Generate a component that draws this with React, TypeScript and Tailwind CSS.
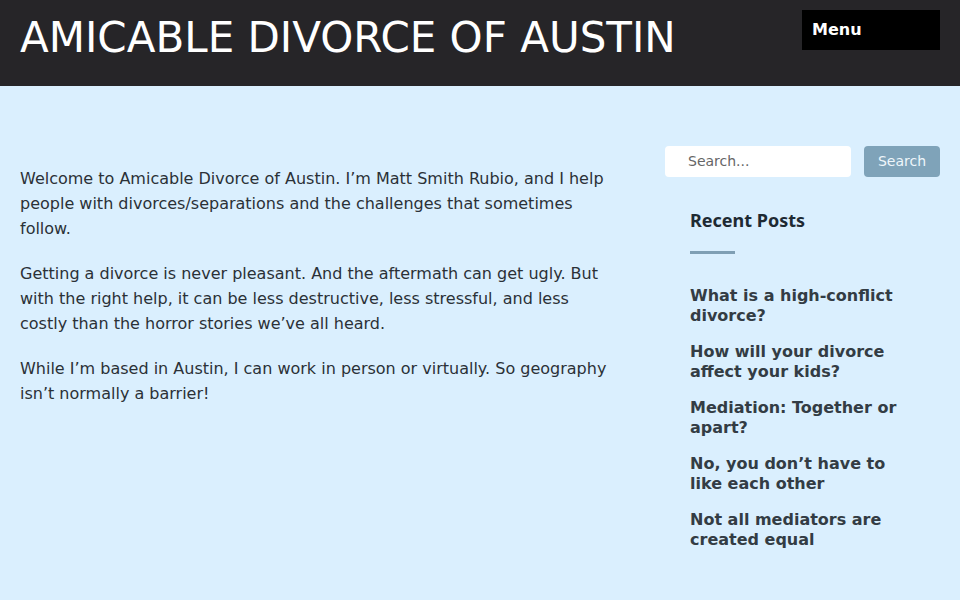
import React from "react";

const posts = [
  "What is a high-conflict divorce?",
  "How will your divorce affect your kids?",
  "Mediation: Together or apart?",
  "No, you don\u2019t have to like each other",
  "Not all mediators are created equal",
];

export default function App() {
  return (
    <div className="min-h-[600px] bg-[#daeffe] font-['DejaVu_Sans',sans-serif]">
      <header className="h-[86px] bg-[#262528] flex justify-between items-start">
        <h1 className="pl-[20px] pt-[13px] text-[42px] leading-[50px] font-normal text-white">
          AMICABLE DIVORCE OF AUSTIN
        </h1>
        <div className="mt-[10px] mr-[20px] w-[138px] h-[40px] bg-black text-white font-bold text-[16px] flex items-center pl-[10px]">
          Menu
        </div>
      </header>
      <div className="flex">
        <main className="w-[600px] ml-[20px] pt-[80px] text-[16px] leading-[25px] text-[#2b3137]">
          <p className="mb-[20px]">
            Welcome to Amicable Divorce of Austin. I’m Matt Smith Rubio, and I help people with divorces/separations and the challenges that sometimes follow.
          </p>
          <p className="mb-[20px]">
            Getting a divorce is never pleasant. And the aftermath can get ugly. But with the right help, it can be less destructive, less stressful, and less costly than the horror stories we’ve all heard.
          </p>
          <p>
            While I’m based in Austin, I can work in person or virtually. So geography isn’t normally a barrier!
          </p>
        </main>
        <aside className="ml-[45px] w-[275px] pt-[60px]">
          <div className="flex items-center justify-between">
            <div className="w-[186px] h-[31px] bg-white rounded-[4px] flex items-center pl-[23px] text-[14px] text-[#666]">
              Search...
            </div>
            <div className="w-[76px] h-[31px] bg-[#7fa3b9] rounded-[4px] flex items-center justify-center text-[14px] text-[#eef6fb] -mt-[1px]">
              Search
            </div>
          </div>
          <div className="pl-[25px]">
            <h2 className="mt-[31px] font-['Noto_Sans',sans-serif] font-bold text-[18px] leading-[24px] text-[#1e2a33]">
              Recent Posts
            </h2>
            <div className="mt-[19px] w-[45px] h-[3px] bg-[#7f9fb4]" />
            <ul className="mt-[32px] w-[220px]">
              {posts.map((p) => (
                <li key={p} className="mb-[16px] font-bold text-[16px] leading-[20px] text-[#333c44]">
                  {p}
                </li>
              ))}
            </ul>
          </div>
        </aside>
      </div>
    </div>
  );
}
